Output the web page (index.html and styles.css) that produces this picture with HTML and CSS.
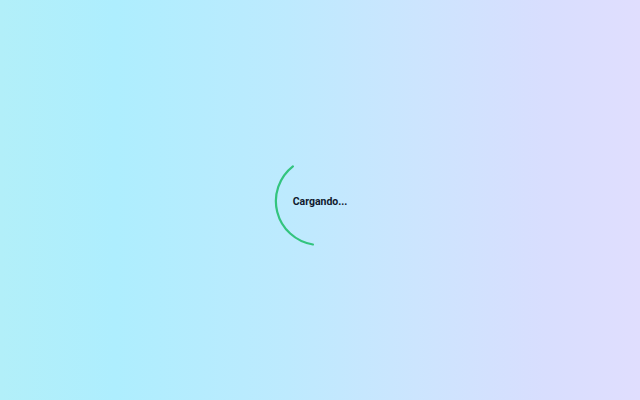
FILE: index.html
```html
<!DOCTYPE html>
<html lang="es">
<head>
<meta charset="utf-8">
<link rel="stylesheet" href="styles.css">
</head>
<body>
<main class="screen">
  <div class="loader">
    <svg class="ring" viewBox="0 0 92 92" width="92" height="92">
      <path class="arc" d="M 38.9 89.5 A 44 44 0 0 1 18.9 11.3" fill="none"/>
    </svg>
    <span class="label">Cargando...</span>
  </div>
</main>
</body>
</html>
```
FILE: styles.css
```css
html, body {
  margin: 0;
  padding: 0;
  height: 100%;
}
.screen {
  height: 100vh;
  display: flex;
  align-items: center;
  justify-content: center;
  background: linear-gradient(90deg, #b2eff9 0%, #aeeefe 18%, #bdeafe 45%, #cce5fe 65%, #d8defe 85%, #e0defe 100%);
}
.loader {
  position: relative;
  width: 92px;
  height: 92px;
  display: flex;
  align-items: center;
  justify-content: center;
  margin-top: 2px;
}
.ring {
  position: absolute;
  left: 0;
  top: 0;
}
.arc {
  stroke: #33c47e;
  stroke-width: 2.2;
  stroke-linecap: round;
}
.label {
  position: relative;
  font-family: Roboto, "Liberation Sans", sans-serif;
  font-weight: 700;
  font-size: 10.5px;
  color: #111a2e;
}
```
